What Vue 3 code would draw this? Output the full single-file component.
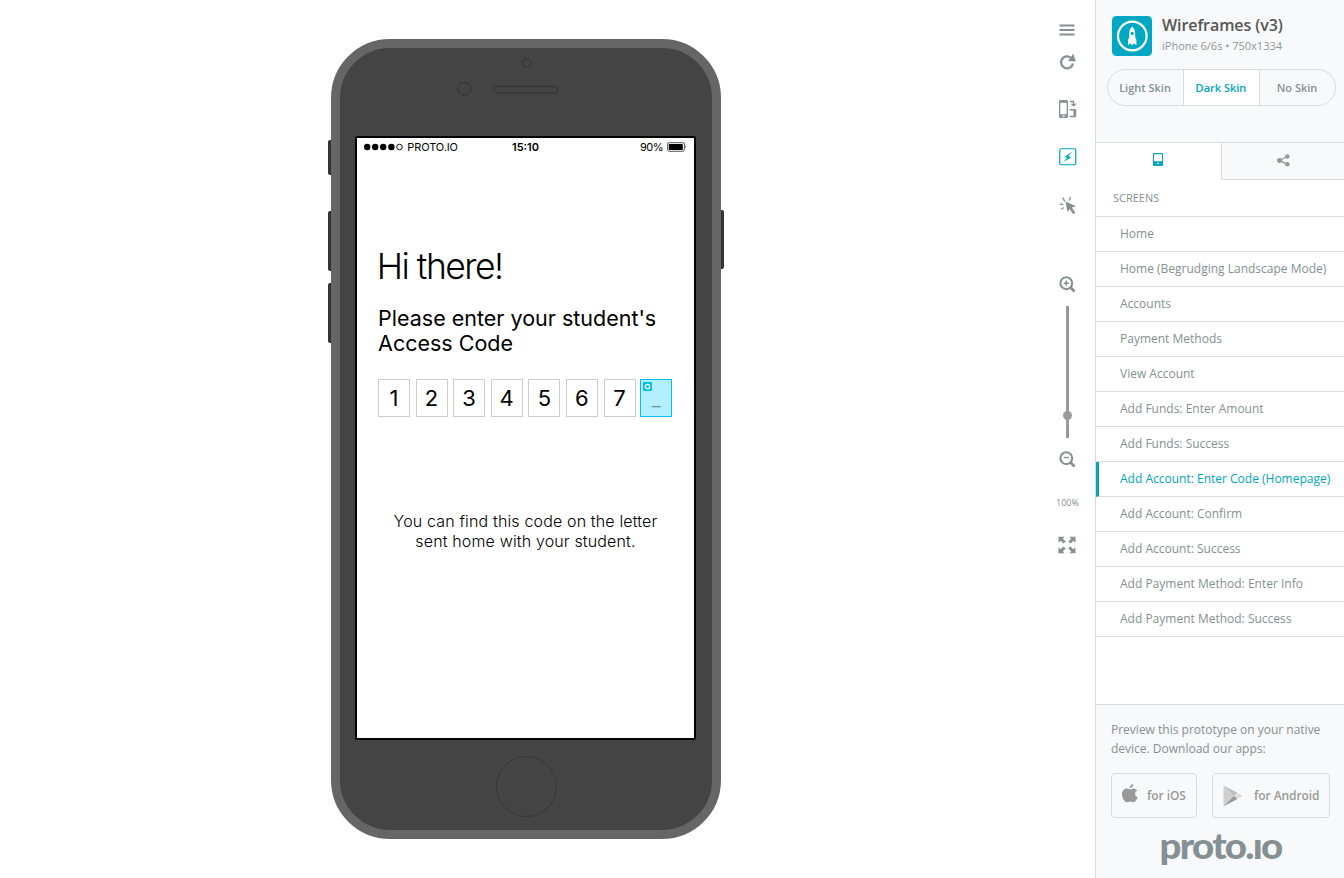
<script setup>
import { ref } from 'vue'

const skins = ['Light Skin', 'Dark Skin', 'No Skin']
const skin = ref('Dark Skin')
const screens = [
  'Home',
  'Home (Begrudging Landscape Mode)',
  'Accounts',
  'Payment Methods',
  'View Account',
  'Add Funds: Enter Amount',
  'Add Funds: Success',
  'Add Account: Enter Code (Homepage)',
  'Add Account: Confirm',
  'Add Account: Success',
  'Add Payment Method: Enter Info',
  'Add Payment Method: Success',
]
const current = ref(7)
const digits = [1, 2, 3, 4, 5, 6, 7]
</script>

<template>
  <div class="player">
    <main class="stage">
      <div class="phone">
        <i class="key mute"></i>
        <i class="key vol-up"></i>
        <i class="key vol-down"></i>
        <i class="key power"></i>
        <svg class="sensors" width="372" height="88" viewBox="0 0 372 88" fill="none" stroke="#333">
          <circle cx="186.7" cy="15.2" r="4.3" />
          <circle cx="124.2" cy="41" r="6.5" />
          <rect x="153.7" y="38.4" width="64" height="6.4" rx="3.2" />
        </svg>
        <section class="screen">
          <div class="status">
            <div class="carrier">
              <svg width="40" height="8" viewBox="0 0 40 8">
                <circle cx="3.2" cy="4" r="3.2" /><circle cx="11.2" cy="4" r="3.2" />
                <circle cx="19.2" cy="4" r="3.2" /><circle cx="27.4" cy="4" r="3.2" />
                <circle cx="35.5" cy="4" r="2.8" fill="none" stroke="#000" stroke-width=".9" />
              </svg>
              <span>PROTO.IO</span>
            </div>
            <b class="clock">15:10</b>
            <div class="battery">
              <span>90%</span>
              <svg width="20" height="10" viewBox="0 0 20 10">
                <rect x=".6" y=".7" width="16.800" height="8.600" rx="1.6" fill="#fff" stroke="#555" stroke-width="1" />
                <rect x="1.800" y="2" width="14" height="6" rx=".5" />
                <path d="M18.2 3.4q1.2 1.6 0 3.2z" />
              </svg>
            </div>
          </div>
          <h1>Hi there!</h1>
          <h2>Please enter your student's<br />Access Code</h2>
          <div class="code">
            <span v-for="d in digits" :key="d" class="cell">{{ d }}</span>
            <span class="cell active">
              <svg class="spot" width="9" height="9" viewBox="0 0 9 9">
                <rect width="9" height="9" rx="1" fill="#00bfe8" />
                <circle cx="4.500" cy="4.500" r="2.200" fill="none" stroke="#fff" stroke-width="1.3" />
              </svg>
              <span class="caret">_</span>
            </span>
          </div>
          <p class="hint">You can find this code on the letter<br />sent home with your student.</p>
        </section>
        <div class="home"></div>
      </div>
    </main>

    <nav class="tools">
      <div class="slot menu">
        <svg width="16" height="12" viewBox="0 0 16 12" stroke="#849092" stroke-width="2"><path d="M.5 1.500h15M.5 6h15M.5 10.500h15" /></svg>
      </div>
      <div class="slot refresh">
        <svg width="18" height="18" viewBox="0 0 18 18">
          <path d="M14 10.600A6 6 0 1 1 11.800 4.600" fill="none" stroke="#849092" stroke-width="2.3" />
          <path d="M14.400 .8L16.800 8.400 9 8z" fill="#849092" />
        </svg>
      </div>
      <div class="slot rotate">
        <svg width="18" height="18" viewBox="0 0 18 18">
          <path fill="#849092" fill-rule="evenodd" d="M1.500 0h6Q9 0 9 1.500v15Q9 18 7.500 18h-6Q0 18 0 16.500v-15Q0 0 1.500 0zM1.300 2.800v11.400h6.400V2.800zM3.300 15.500v1.200h2.400v-1.200z" />
          <path fill="#849092" d="M11 .8h4.300v3H17.600L14.600 6.800 11.700 3.800h2.200V2.200H11zM10.500 9h5.300q1.400 0 1.400 1.400v5.600q0 1.300-1.400 1.300h-5.300v-1.500h4v-5.300h-4z" />
        </svg>
      </div>
      <div class="slot tall">
        <svg width="18" height="18" viewBox="0 0 18 18">
          <rect x=".75" y=".75" width="16" height="16" rx="1.4" fill="#fff" stroke="#00a5be" stroke-width="1.2" />
          <path fill="#00a5be" d="M13.400 3.800L5.200 9l3 .8L4.200 14l8.300-4.800-3.100-1z" />
        </svg>
      </div>
      <div class="slot tall">
        <svg width="18" height="20" viewBox="0 0 18 20" fill="#849092">
          <path d="M6.500 6.500L17 11.300l-4.200 1.200 3.600 5.200-2.200 1.500-3.500-5.300-2.300 3z" />
          <path d="M.8 9l3.600.7M3.600 2.700l2.200 3.700M10.200 5.500l1.300-3.600M4.600 12.500L2.400 14.300" fill="none" stroke="#849092" stroke-width="1.3" />
        </svg>
      </div>
      <div class="slot zoom-in">
        <svg width="17" height="17" viewBox="0 0 17 17" fill="none" stroke="#849092">
          <circle cx="7.300" cy="7.200" r="5.900" stroke-width="2.100" /><path d="M11.500 11.500l4 4" stroke-width="2.600" />
          <path d="M7.300 4.600v5.200M4.700 7.200h5.200" stroke-width="1.500" />
        </svg>
      </div>
      <div class="slider"><i></i></div>
      <div class="slot zoom-out">
        <svg width="17" height="17" viewBox="0 0 17 17" fill="none" stroke="#849092">
          <circle cx="7.300" cy="7.200" r="5.900" stroke-width="2.100" /><path d="M11.500 11.500l4 4" stroke-width="2.600" />
          <path d="M4.700 6.500h5.200" stroke-width="1.400" />
        </svg>
      </div>
      <div class="slot percent">100%</div>
      <div class="slot full">
        <svg width="18" height="18" viewBox="0 0 18 18" fill="#849092">
          <g id="corner"><path d="M.5 .7h6L4.800 2.800l3 2.800L5.600 7.600l-3-2.800L.5 6.700z" /></g>
          <use href="#corner" transform="matrix(-1 0 0 1 18 0)" />
          <use href="#corner" transform="matrix(1 0 0 -1 0 18)" />
          <use href="#corner" transform="matrix(-1 0 0 -1 18 18)" />
        </svg>
      </div>
    </nav>

    <aside class="side">
      <header>
        <div class="project">
          <svg width="40" height="40" viewBox="0 0 40 40">
            <rect width="40" height="40" rx="4.500" fill="#00a8c1" />
            <circle cx="20.300" cy="20" r="14.300" fill="none" stroke="#fff" stroke-width="2.200" />
            <path fill="#fff" fill-rule="evenodd" d="M20.200 10.600c2.400 2.200 3.200 5 3 8v3l1.200 2.200v5.400l-2.600-2-1.600 2.200-1.600-2.200-2.600 2v-5.400l1.200-2.200v-3c-.2-3 .6-5.800 3-8zm0 5.200a1.600 1.600 0 1 0 0 3.200 1.600 1.600 0 0 0 0-3.200z" />
          </svg>
          <div>
            <div class="title">Wireframes (v3)</div>
            <div class="device">iPhone 6/6s • 750x1334</div>
          </div>
        </div>
        <div class="skins">
          <button v-for="s in skins" :key="s" :class="{ on: s === skin }" @click="skin = s">{{ s }}</button>
        </div>
      </header>
      <div class="tabs">
        <div class="tab on">
          <svg width="10" height="13" viewBox="0 0 10 13">
            <path fill="#00a5be" fill-rule="evenodd" d="M.8 0h8.400q.8 0 .8.800v11.400q0 .8-.8.800H.8Q0 13 0 12.200V.8Q0 0 .8 0zM1 1.200v7h8v-7zM4 9.700v1.400h2V9.700z" />
          </svg>
        </div>
        <div class="tab">
          <svg width="13" height="13" viewBox="0 0 13 13" fill="#999">
            <path d="M10.200 2.500L2.700 6.400l7.500 4" fill="none" stroke="#999" stroke-width="1.400" />
            <circle cx="10.300" cy="2.500" r="2.300" /><circle cx="2.500" cy="6.400" r="2.500" /><circle cx="10.300" cy="10.300" r="2.300" />
          </svg>
        </div>
      </div>
      <div class="caption">SCREENS</div>
      <ul>
        <li v-for="(s, i) in screens" :key="s" :class="{ on: i === current }" @click="current = i">{{ s }}</li>
      </ul>
      <footer>
        <p>Preview this prototype on your native<br />device. Download our apps:</p>
        <div class="stores">
          <a class="ios">
            <svg width="16" height="19" viewBox="0 0 16 19" fill="#999">
              <path d="M11.200 0c.2 2-1.500 4.200-3.600 4.100C7.400 2.200 9.200.2 11.200 0zM8 5.300c.8 0 1.700-.9 3.400-.9 1.500 0 2.900.8 3.700 2-3 1.700-2.500 5.700.6 6.800-.8 2.300-2.400 5-4.200 5-1.300 0-1.800-.8-3.200-.8s-2 .8-3.200.8C2.700 18.200 0 14.300 0 10.400c0-3.700 2.200-5.900 4.600-5.900 1.500 0 2.600.8 3.400.8z" />
            </svg>
            for iOS
          </a>
          <a class="android">
            <svg width="20" height="22" viewBox="0 0 20 22">
              <path d="M.5.500v21L11 10.800z" fill="#cfcfcf" />
              <path d="M.5.500L14.300 7.800 11 10.800z" fill="#bbb" />
              <path d="M14.300 7.800l5.200 3-5.200 3.200L11 10.800z" fill="#dcdcdc" />
              <path d="M.5 21.500L14.300 14 11 10.800z" fill="#999" />
            </svg>
            for Android
          </a>
        </div>
        <svg class="brand" width="124" height="40" viewBox="0 0 124 40" aria-label="proto.io">
          <text x=".5" y="27" textLength="122" lengthAdjust="spacingAndGlyphs">proto.ıo</text>
        </svg>
      </footer>
    </aside>
  </div>
</template>

<style>
body { background: #fff; }
</style>

<style scoped>
* { box-sizing: border-box; }
.player { display: flex; width: 1344px; height: 878px; overflow: hidden; font-family: "Open Sans", sans-serif; color: #849092; }

.stage { width: 1040px; padding: 39px 0 0 331px; font-family: Inter, sans-serif; color: #000; }
.phone { position: relative; width: 390px; height: 800px; border: 9px solid #666; border-radius: 59px; background: #444; display: flex; flex-direction: column; align-items: center; }
.sensors { display: block; flex: none; }
.key { position: absolute; left: -12px; width: 3px; background: #333; border-radius: 2px 0 0 2px; }
.mute { top: 92px; height: 35px; }
.vol-up { top: 163px; height: 60px; }
.vol-down { top: 235px; height: 60px; }
.power { left: auto; right: -12px; top: 162px; height: 59px; border-radius: 0 2px 2px 0; }
.screen { flex: none; width: 341.500px; height: 604px; margin-right: 1px; border: 2px solid #000; border-radius: 2px; background: #fff; padding-left: 21px; }
.home { width: 61px; height: 61px; margin-top: 16px; border: 1px solid #363636; border-radius: 50%; }

.status { display: grid; grid-template-columns: 1fr auto 1fr; align-items: center; height: 18px; margin: 0 7px 0 -14px; font-size: 11px; line-height: 18px; }
.carrier { display: flex; align-items: center; gap: 3.500px; letter-spacing: -.1px; }
.clock { font-weight: 600; }
.battery { display: flex; align-items: center; justify-content: flex-end; gap: 4px; letter-spacing: -.4px; }
h1 { margin: 87px 0 0 -1px; font-weight: 300; font-size: 35.500px; line-height: 48px; letter-spacing: -1.500px; }
h2 { margin: 15px 0 0 .3px; font-weight: 400; font-size: 21.500px; line-height: 25px; letter-spacing: 0; white-space: nowrap; }
.code { display: flex; gap: 5.600px; margin: 23px 0 0 .2px; }
.cell { position: relative; width: 32px; height: 38px; border: 1px solid #ccc; text-align: center; font-size: 22px; line-height: 37px; }
.active { border-color: #00bfe8; background: #b2efff; color: #6c9299; margin-left: -.8px; }
.spot { position: absolute; left: 2px; top: 2px; }
.caret { font-size: 20px; font-weight: 300; }
.hint { margin: 94px 21px 0 0; text-align: center; font-weight: 300; font-size: 16px; line-height: 20px; letter-spacing: .15px; white-space: nowrap; }

.tools { width: 55px; padding-top: 14px; display: flex; flex-direction: column; align-items: center; }
.slot { flex: none; height: 32px; display: flex; align-items: center; justify-content: center; }
.refresh { height: 31px; margin-top: .500px; }
.rotate { height: 48px; margin-top: 7.500px; }
.tall { height: 48px; }
.zoom-in { margin-top: 39px; }
.slider { flex: none; width: 3px; height: 132px; margin-top: 6px; background: #999; position: relative; }
.slider i { position: absolute; left: -3px; top: 105px; width: 9px; height: 9px; border-radius: 50%; background: #999; }
.zoom-out { margin-top: 5px; }
.percent { margin-top: 11px; font-size: 9px; }
.full { margin-top: 11px; }
.menu, .full { padding-right: 1px; }

.side { width: 249px; border-left: 1px solid #dcdcdc; display: flex; flex-direction: column; }
header { height: 143px; padding: 16px 8px 0 11px; background: #f8f9fb; border-bottom: 1px solid #dcdcdc; }
.project { display: flex; gap: 10px; padding-left: 5px; height: 53px; }
.title { font-size: 16px; line-height: 19px; font-weight: 600; color: #555; white-space: nowrap; letter-spacing: -.08px; }
.device { margin-top: 3px; font-size: 11px; line-height: 16px; white-space: nowrap; color: #909698; }
.skins { display: flex; height: 37px; border: 1px solid #dcdcdc; border-radius: 19px; overflow: hidden; }
.skins button { flex: 1; padding: 0 1px 0 0; border: 0; background: none; font: 600 11px "Open Sans", sans-serif; color: #849092; }
.skins button + button { border-left: 1px solid #dcdcdc; }
.skins .on { background: #fff; color: #00a5be; }
.tabs { display: flex; height: 37px; }
.tab { flex: 1; display: flex; justify-content: center; padding-top: 11px; background: #f8f9fb; border-left: 1px solid #dcdcdc; border-bottom: 1px solid #dcdcdc; }
.tab.on { flex: none; width: 125px; padding: 10px 1px 0 0; background: #fff; border: 0; }
.caption { height: 37px; padding-left: 17px; border-bottom: 1px solid #dcdcdc; font-size: 11px; line-height: 36px; }
ul { list-style: none; margin: 0; padding: 0; flex: 1; }
li { height: 35px; padding-left: 24px; border-bottom: 1px solid #dcdcdc; font-size: 12px; line-height: 33px; white-space: nowrap; color: #849092; }
li.on { padding-left: 21px; border-left: 3px solid #00a5be; color: #00a5be; }
footer { height: 174px; padding: 15px 0 0 15px; border-top: 1px solid #dcdcdc; background: #f8f9fb; }
footer p { margin: 0; font-size: 12px; line-height: 19px; white-space: nowrap; }
.stores { display: flex; gap: 15px; margin-top: 15px; }
.stores a { display: flex; align-items: center; height: 45px; border: 1px solid #dcdcdc; border-radius: 4px; font-size: 12px; font-weight: 600; color: #999; white-space: nowrap; letter-spacing: -.08px; }
.ios { width: 86px; padding-left: 10px; gap: 9px; }
.ios svg { margin-top: -4px; }
.android { width: 118px; padding-left: 10px; gap: 11px; }
.brand { display: block; margin: 14px 0 0 48px; overflow: visible; }
.brand text { font-family: Lato, sans-serif; font-weight: 900; font-size: 36px; letter-spacing: -1.600px; fill: #849092; }
</style>
